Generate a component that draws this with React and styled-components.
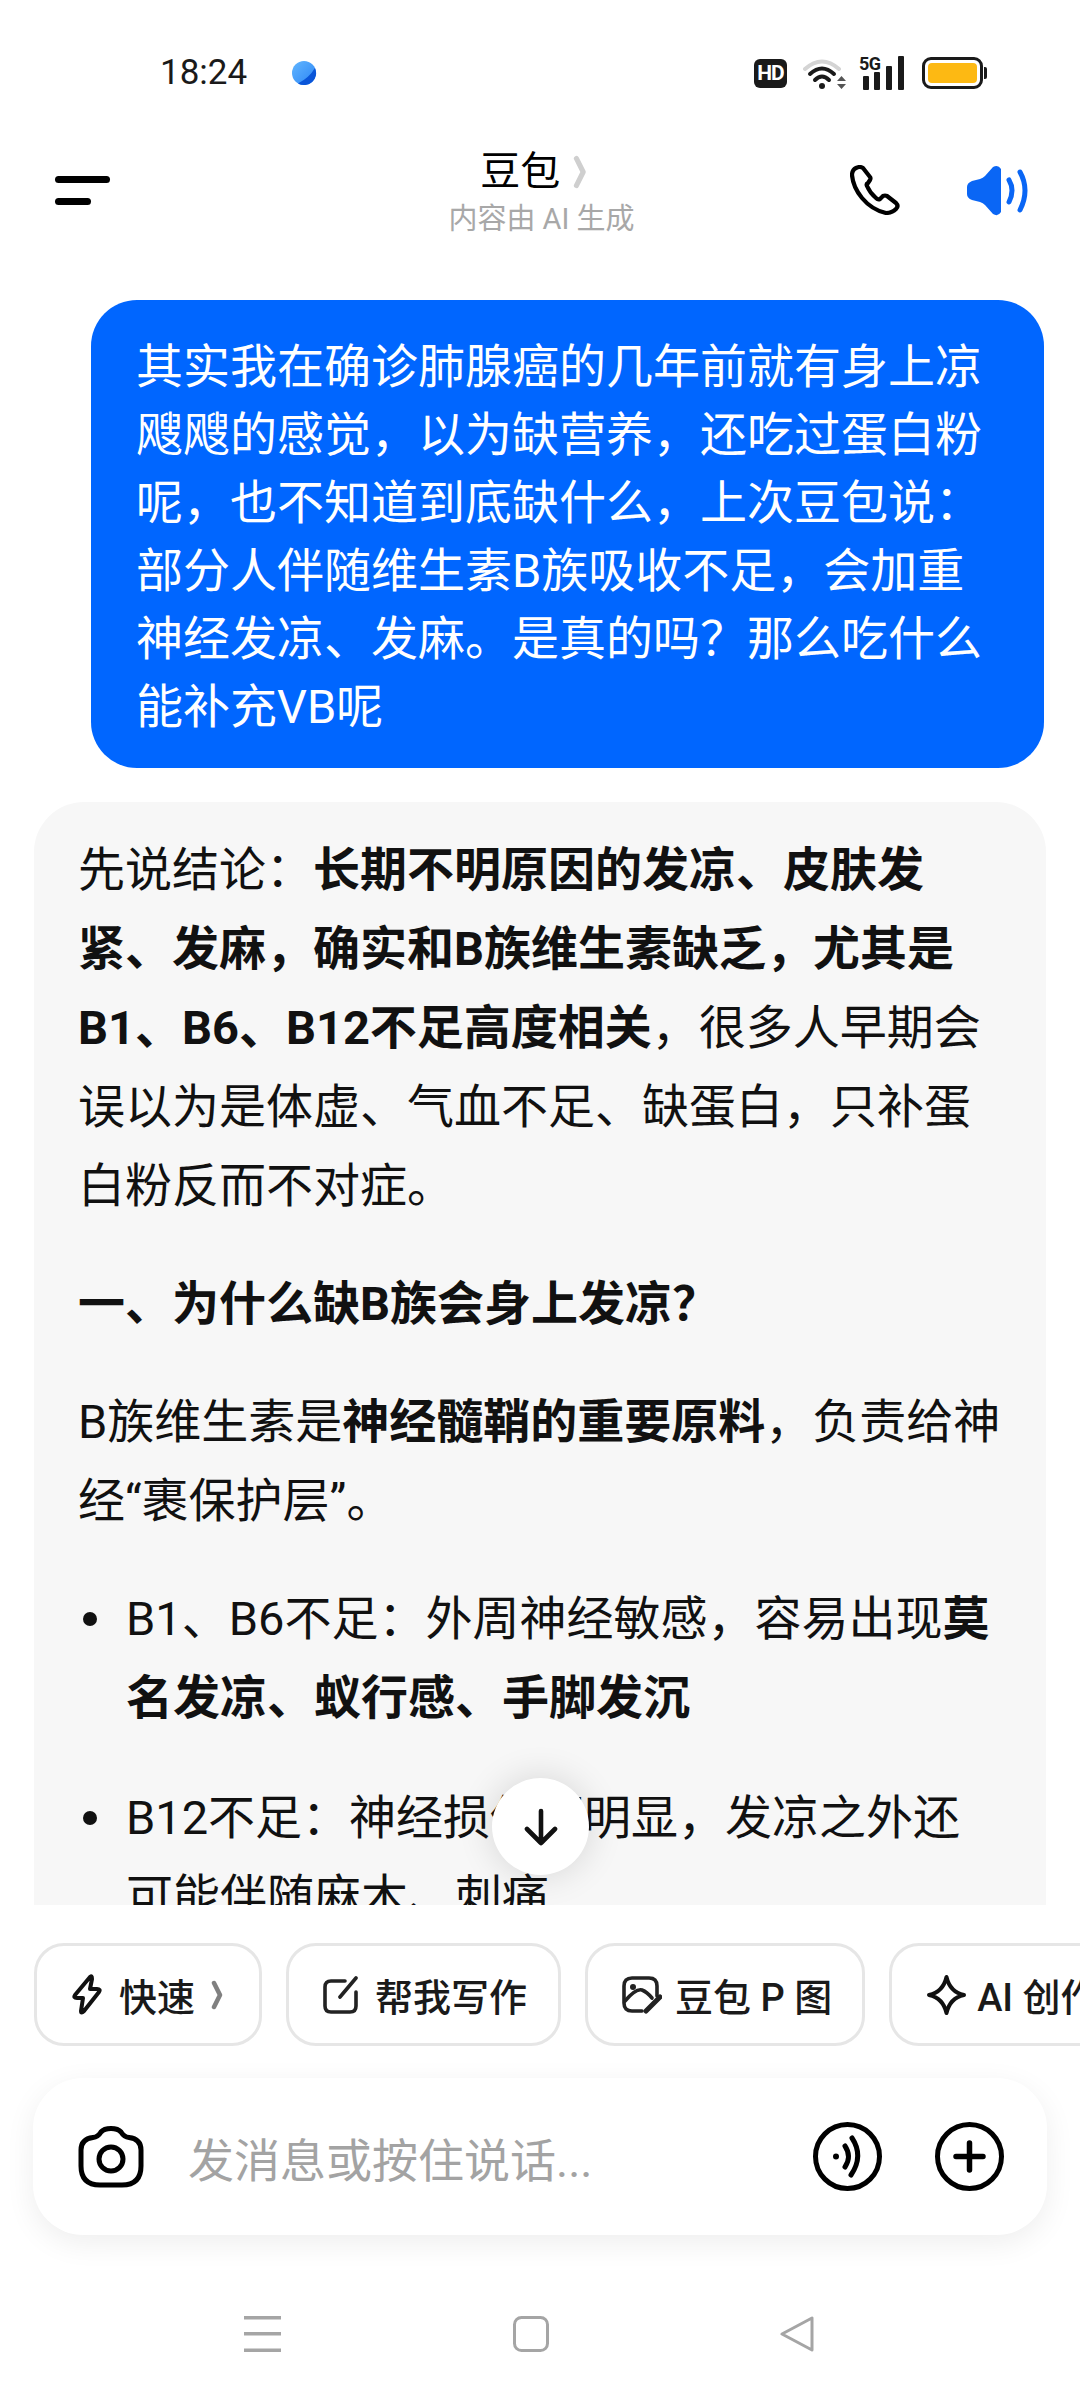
import React from "react";
import styled, { createGlobalStyle } from "styled-components";

const GlobalStyle = createGlobalStyle`
	html, body {
		margin: 0;
		padding: 0;
		background: #fff;
	}
	* {
		box-sizing: border-box;
	}
`;

const Screen = styled.div`
	width: 1080px;
	height: 2400px;
	display: flex;
	flex-direction: column;
	overflow: hidden;
	background: #fff;
	color: #111;
	font-family: Roboto, "Noto Sans CJK SC", sans-serif;
`;

/* status bar */
const StatusBar = styled.div`
	height: 100px;
	padding: 46px 97px 0 160px;
	display: flex;
	align-items: center;
	justify-content: space-between;
	flex-shrink: 0;
`;

const StatusLeft = styled.div`
	display: flex;
	align-items: center;
	gap: 44px;
`;

const Clock = styled.span`
	font-family: Roboto, "Liberation Sans", sans-serif;
	font-size: 35px;
	color: #1a1a1a;
	line-height: 40px;
`;

const StatusRight = styled.div`
	display: flex;
	align-items: center;
`;

const HdBadge = styled.span`
	width: 33px;
	height: 29px;
	margin-right: 16px;
	border-radius: 6px;
	background: #1a1a1a;
	color: #fff;
	font-family: Roboto, "Liberation Sans", sans-serif;
	font-size: 21px;
	font-weight: 700;
	letter-spacing: -1px;
	display: flex;
	align-items: center;
	justify-content: center;
`;

const Battery = styled.div`
	position: relative;
	width: 61px;
	height: 32px;
	margin-left: 16px;
	padding: 3px;
	border: 3px solid #1a1a1a;
	border-radius: 9px;
	&::after {
		content: "";
		position: absolute;
		right: -7px;
		top: 7px;
		width: 3px;
		height: 12px;
		border-radius: 0 2px 2px 0;
		background: #1a1a1a;
	}
`;

const BatteryFill = styled.div`
	height: 100%;
	border-radius: 4px;
	background: #fdb913;
`;

/* header */
const Header = styled.header`
	height: 180px;
	padding: 0 52px 0 55px;
	display: grid;
	grid-template-columns: 1fr auto 1fr;
	align-items: center;
	flex-shrink: 0;
`;

const MenuButton = styled.div`
	display: flex;
	flex-direction: column;
	gap: 15px;
`;

const MenuLine = styled.span`
	display: block;
	width: ${p => p.$w}px;
	height: 7px;
	border-radius: 4px;
	background: #000;
`;

const TitleBlock = styled.div`
	display: flex;
	flex-direction: column;
	align-items: center;
	gap: 3px;
	padding-top: 5px;
`;

const TitleRow = styled.div`
	display: flex;
	align-items: center;
	gap: 13px;
	margin-left: -16px;
	font-size: 40px;
	line-height: 50px;
	color: #000;
`;

const SubTitle = styled.div`
	font-size: 29px;
	line-height: 38px;
	color: #a8a8a8;
`;

const HeaderActions = styled.div`
	display: flex;
	justify-content: flex-end;
	align-items: center;
	gap: 67px;
`;

/* chat */
const ChatPanel = styled.main`
	position: relative;
	height: 1625px;
	flex-shrink: 0;
	overflow: hidden;
	padding-top: 20px;
`;

const UserBubble = styled.div`
	margin: 0 36px 34px 91px;
	padding: 33px 46px 27px 45px;
	border-radius: 46px;
	background: #0066ff;
	color: #fff;
	font-size: 47px;
	line-height: 68px;
`;

const AnswerBubble = styled.div`
	margin: 0 34px;
	padding: 28px 38px 0 44px;
	border-radius: 50px 50px 0 0;
	background: #f7f7f7;
	font-size: 47px;
	line-height: 79px;
	height: 1200px;
`;

const Paragraph = styled.p`
	margin: 0 0 39px;
`;

const Heading = styled.h3`
	margin: 0 0 39px;
	font-size: 47px;
	line-height: 79px;
	font-weight: 700;
`;

const BulletList = styled.ul`
	margin: 0;
	padding: 0;
	list-style: none;
	display: flex;
	flex-direction: column;
	gap: 41px;
`;

const BulletItem = styled.li`
	display: flex;
	margin-right: 8px;
	&::before {
		content: "";
		flex-shrink: 0;
		width: 14px;
		height: 14px;
		margin: 33px 29px 0 5px;
		border-radius: 50%;
		background: #111;
	}
`;

const ScrollButton = styled.div`
	position: absolute;
	left: 492px;
	bottom: 30px;
	width: 97px;
	height: 97px;
	border-radius: 50%;
	background: #fff;
	box-shadow: 0 0 36px rgba(0, 0, 0, 0.14);
	display: flex;
	align-items: center;
	justify-content: center;
`;

/* chips */
const ChipRow = styled.div`
	display: flex;
	gap: 24px;
	padding: 38px 0 32px 34px;
	overflow: hidden;
	flex-shrink: 0;
`;

const Chip = styled.div`
	flex-shrink: 0;
	height: 103px;
	padding: 0 ${p => p.$right || 31}px 0 34px;
	display: flex;
	align-items: center;
	gap: ${p => p.$gap || 16}px;
	border: 3px solid #e6e6e6;
	border-radius: 30px;
	background: #fff;
	font-size: 38px;
	font-weight: 500;
	color: #1a1a1a;
	white-space: nowrap;
`;

/* input */
const InputCard = styled.div`
	height: 157px;
	margin: 0 33px;
	padding: 0 43px 0 45px;
	display: flex;
	align-items: center;
	flex-shrink: 0;
	border-radius: 50px;
	background: #fff;
	box-shadow: 0 8px 30px rgba(0, 0, 0, 0.07);
`;

const Placeholder = styled.div`
	flex: 1;
	margin-left: 44px;
	font-size: 46px;
	color: #a3a3a3;
`;

const InputActions = styled.div`
	display: flex;
	align-items: center;
	gap: 53px;
`;

/* system nav */
const NavBar = styled.nav`
	height: 165px;
	flex-shrink: 0;
	padding: 81px 266px 0 244px;
	display: flex;
	justify-content: space-between;
	align-items: flex-start;
`;

const PhoneIcon = () => (
	<svg width="50" height="50" viewBox="0 0 50 50" fill="none" stroke="#000" strokeWidth="4.2" strokeLinejoin="round">
		<path d="M6 3Q2 5 2 10Q3 22 12 33Q22 45 36 48Q42 48 46 44Q49 41 46 38L37 31Q35 30 33 31L30 34Q28 35 26 33Q20 28 17 21Q16 19 18 18L20 15Q21 13 20 12L13 3Q10 1 6 3Z" />
	</svg>
);

const SpeakerIcon = () => (
	<svg width="61" height="51" viewBox="0 0 61 51" fill="none">
		<path d="M5 16L13 14Q16 13 18 11L26 2Q31 -1 34 4V47Q31 52 26 49L18 40Q16 38 13 37L5 35Q0 33 0 29V22Q0 18 5 16Z" fill="#0a66f5" />
		<path d="M42 15Q48 25 42 37M53 7Q63 25 53 45" stroke="#0a66f5" strokeWidth="5" strokeLinecap="round" />
	</svg>
);

const LeafDot = () => (
	<svg width="26" height="26" viewBox="0 0 26 26">
		<defs>
			<linearGradient id="leaf" x1="0" y1="0" x2="1" y2="1">
				<stop offset="0" stopColor="#62b6ff" />
				<stop offset="1" stopColor="#2a84f5" />
			</linearGradient>
		</defs>
		<circle cx="13" cy="13" r="12" fill="url(#leaf)" />
		<path d="M7 23.4A12 12 0 0 0 24 8Q18 18 7 23.4Z" fill="#0a55d8" />
	</svg>
);

const WifiIcon = () => (
	<svg width="44" height="33" viewBox="0 0 44 33" fill="none" strokeLinecap="round">
		<path d="M2 12Q19 -3 36 12" stroke="#d4d4d4" strokeWidth="4" />
		<path d="M7 17Q19 6 31 17" stroke="#1a1a1a" strokeWidth="4" />
		<path d="M12 23Q19 16 26 23" stroke="#1a1a1a" strokeWidth="4" />
		<circle cx="19" cy="29" r="3" fill="#1a1a1a" />
		<path d="M34 24L38.5 19L43 24ZM34 27L38.5 32L43 27Z" fill="#555" />
	</svg>
);

const SignalIcon = () => (
	<svg width="47" height="36" viewBox="0 0 47 36" style={{ marginLeft: 12 }}>
		<text x="0" y="15" fontFamily="Roboto, sans-serif" fontWeight="700" fontSize="18" letterSpacing="-0.5" fill="#1a1a1a">5G</text>
		<rect x="4" y="21" width="6" height="14" rx="1" fill="#1a1a1a" />
		<rect x="15" y="17" width="6" height="18" rx="1" fill="#1a1a1a" />
		<rect x="27" y="11" width="6" height="24" rx="1" fill="#1a1a1a" />
		<rect x="39" y="1" width="6" height="34" rx="1" fill="#1a1a1a" />
	</svg>
);

const Chevron = ({ size, color }) => (
	<svg width={size * 0.4} height={size} viewBox="0 0 8 20" fill="none">
		<path d="M2 2L6 10L2 18" stroke={color} strokeWidth="3" strokeLinecap="round" strokeLinejoin="round" />
	</svg>
);

const BoltIcon = () => (
	<svg width="32" height="42" viewBox="0 0 32 42" fill="none" stroke="#111" strokeWidth="4" strokeLinejoin="round">
		<path d="M19 3L4 21Q2 24 6 24H12L10 37Q10 40 13 37L28 18Q30 15 26 15H19L21 5Q21 1 19 3Z" />
	</svg>
);

const EditIcon = () => (
	<svg width="36" height="38" viewBox="0 0 36 38" fill="none" stroke="#222" strokeWidth="3.6" strokeLinecap="round">
		<path d="M22 5H8Q2 5 2 11V30Q2 36 8 36H27Q33 36 33 30V16" />
		<path d="M17 21L33 2" />
	</svg>
);

const ImageEditIcon = () => (
	<svg width="40" height="38" viewBox="0 0 40 38" fill="none" stroke="#222" strokeWidth="3.6" strokeLinecap="round">
		<path d="M20 35H10Q2 35 2 27V10Q2 2 10 2H27Q35 2 35 10V20" />
		<circle cx="11" cy="11" r="3" fill="#222" stroke="none" />
		<path d="M3 25Q14 12 20 14Q25 16 30 22" />
		<path d="M38 21L24 35" strokeWidth="5" />
	</svg>
);

const SparkIcon = () => (
	<svg width="41" height="42" viewBox="0 0 41 42" fill="none" stroke="#111" strokeWidth="4" strokeLinejoin="round">
		<path d="M20.5 3Q24 18 38 21Q24 24 20.5 39Q17 24 3 21Q17 18 20.5 3Z" />
	</svg>
);

const ArrowIcon = () => (
	<svg width="36" height="38" viewBox="0 0 36 38" fill="none" stroke="#111" strokeWidth="4.6" strokeLinecap="round" strokeLinejoin="round">
		<path d="M18 3V35M4 21L18 35L32 21" />
	</svg>
);

const CameraIcon = () => (
	<svg width="66" height="62" viewBox="0 0 66 62" fill="none" stroke="#000" strokeWidth="5">
		<path d="M33 2.5Q40 2.5 43 6Q46 11 51 11.5Q63 13 63 24V40Q63 59 44 59H22Q3 59 3 40V24Q3 13 15 11.5Q20 11 23 6Q26 2.5 33 2.5Z" strokeLinejoin="round" />
		<circle cx="33" cy="33" r="12" />
	</svg>
);

const VoiceIcon = () => (
	<svg width="69" height="69" viewBox="0 0 69 69" fill="none" stroke="#000" strokeWidth="5" strokeLinecap="round">
		<circle cx="34.5" cy="34.5" r="32" />
		<circle cx="23" cy="34.5" r="3" fill="#000" stroke="none" />
		<path d="M32 24Q39 34.5 32 45" />
		<path d="M39 16Q51 34 38 53" />
	</svg>
);

const PlusIcon = () => (
	<svg width="69" height="69" viewBox="0 0 69 69" fill="none" stroke="#000" strokeWidth="5" strokeLinecap="round">
		<circle cx="34.5" cy="34.5" r="32" />
		<path d="M34.5 21V48M21 34.5H48" strokeWidth="5.5" />
	</svg>
);

const NavMenuIcon = () => (
	<svg width="37" height="36" viewBox="0 0 37 36" fill="#a5a5a5">
		<rect y="0" width="37" height="3.5" />
		<rect y="16" width="37" height="3.5" />
		<rect y="32.5" width="37" height="3.5" />
	</svg>
);

const NavHomeIcon = () => (
	<svg width="36" height="36" viewBox="0 0 36 36" fill="none" stroke="#a5a5a5" strokeWidth="3">
		<rect x="1.5" y="1.5" width="33" height="33" rx="7" />
	</svg>
);

const NavBackIcon = () => (
	<svg width="34" height="36" viewBox="0 0 34 36" fill="none" stroke="#a5a5a5" strokeWidth="3" strokeLinejoin="round">
		<path d="M32 2V34L2 18Z" />
	</svg>
);

const App = () => (
	<Screen>
		<GlobalStyle />
		<StatusBar>
			<StatusLeft>
				<Clock>18:24</Clock>
				<LeafDot />
			</StatusLeft>
			<StatusRight>
				<HdBadge>HD</HdBadge>
				<WifiIcon />
				<SignalIcon />
				<Battery>
					<BatteryFill />
				</Battery>
			</StatusRight>
		</StatusBar>

		<Header>
			<MenuButton>
				<MenuLine $w={55} />
				<MenuLine $w={36} />
			</MenuButton>
			<TitleBlock>
				<TitleRow>
					豆包
					<Chevron size={34} color="#cfcfcf" />
				</TitleRow>
				<SubTitle>内容由 AI 生成</SubTitle>
			</TitleBlock>
			<HeaderActions>
				<PhoneIcon />
				<SpeakerIcon />
			</HeaderActions>
		</Header>

		<ChatPanel>
			<UserBubble>
				其实我在确诊肺腺癌的几年前就有身上凉飕飕的感觉&#xFF0C;以为缺营养&#xFF0C;还吃过蛋白粉呢&#xFF0C;也不知道到底缺什么&#xFF0C;上次豆包说&#xFF1A;部分人伴随维生素B族吸收不足&#xFF0C;会加重神经发凉、发麻。是真的吗&#xFF1F;那么吃什么能补充VB呢
			</UserBubble>
			<AnswerBubble>
				<Paragraph>
					先说结论&#xFF1A;<strong>长期不明原因的发凉、皮肤发紧、发麻&#xFF0C;确实和B族维生素缺乏&#xFF0C;尤其是B1、B6、B12不足高度相关</strong>&#xFF0C;很多人早期会误以为是体虚、气血不足、缺蛋白&#xFF0C;只补蛋白粉反而不对症。
				</Paragraph>
				<Heading>一、为什么缺B族会身上发凉&#xFF1F;</Heading>
				<Paragraph>
					B族维生素是<strong>神经髓鞘的重要原料</strong>&#xFF0C;负责给神经“裹保护层”。
				</Paragraph>
				<BulletList>
					<BulletItem>
						<div>
							B1、B6不足&#xFF1A;外周神经敏感&#xFF0C;容易出现<strong>莫名发凉、蚁行感、手脚发沉</strong>
						</div>
					</BulletItem>
					<BulletItem>
						<div>B12不足&#xFF1A;神经损伤更明显&#xFF0C;发凉之外还可能伴随麻木、刺痛</div>
					</BulletItem>
				</BulletList>
			</AnswerBubble>
			<ScrollButton>
				<ArrowIcon />
			</ScrollButton>
		</ChatPanel>

		<ChipRow>
			<Chip $right={36}>
				<BoltIcon />
				快速
				<Chevron size={30} color="#808080" />
			</Chip>
			<Chip>
				<EditIcon />
				帮我写作
			</Chip>
			<Chip $gap={13} $right={30}>
				<ImageEditIcon />
				豆包 P 图
			</Chip>
			<Chip $gap={10}>
				<SparkIcon />
				AI 创作
			</Chip>
		</ChipRow>

		<InputCard>
			<CameraIcon />
			<Placeholder>发消息或按住说话...</Placeholder>
			<InputActions>
				<VoiceIcon />
				<PlusIcon />
			</InputActions>
		</InputCard>

		<NavBar>
			<NavMenuIcon />
			<NavHomeIcon />
			<NavBackIcon />
		</NavBar>
	</Screen>
);

export default App;
